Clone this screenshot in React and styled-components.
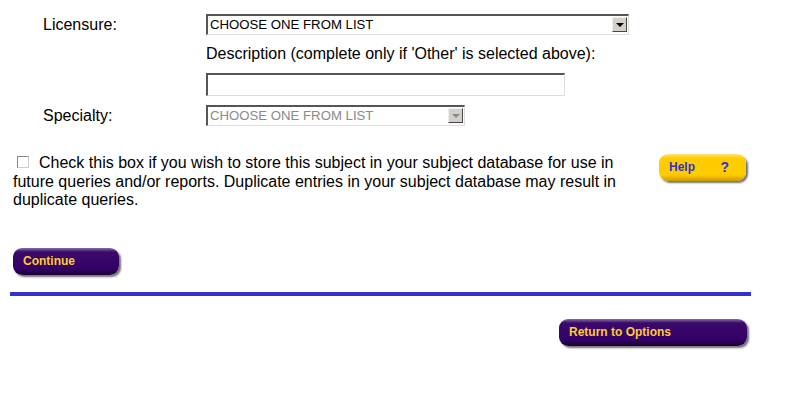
import styled, { createGlobalStyle } from "styled-components";

const GlobalStyle = createGlobalStyle`
  body {
    margin: 0;
    background: #fff;
    font-family: "Liberation Sans", Arial, sans-serif;
    color: #000;
  }
`;

const Page = styled.div`
  width: 795px;
  height: 413px;
  padding: 14px 0 0 0;
  box-sizing: border-box;
`;

const FormGrid = styled.div`
  display: grid;
  grid-template-columns: 163px 1fr;
  padding-left: 43px;
`;

const Label = styled.div`
  font-size: 16px;
  height: 21px;
  line-height: 21px;
`;

const Cell = styled.div`
  height: ${(p) => p.$h}px;
  display: flex;
  align-items: ${(p) => p.$align || "flex-start"};
  font-size: 16px;
`;

const SelectBox = styled.div`
  width: ${(p) => p.$w}px;
  height: 21px;
  box-sizing: border-box;
  border-top: 2px solid #555;
  border-left: 2px solid #555;
  border-right: 1px solid #ddd;
  border-bottom: 1px solid #ddd;
  display: flex;
  align-items: center;
  justify-content: space-between;
  padding-left: 2px;
  padding-right: 1px;
  padding-bottom: 1px;
  font-size: 13.2px;
  color: ${(p) => (p.$disabled ? "#8a8a8a" : "#000")};
  background: #fff;
`;

const ArrowBtn = styled.div`
  width: 15px;
  height: 15px;
  box-sizing: border-box;
  background: #d4d0c8;
  border-top: 1px solid #eee;
  border-left: 1px solid #eee;
  border-right: 1px solid #444;
  border-bottom: 1px solid #444;
  display: flex;
  align-items: center;
  justify-content: center;
  &::after {
    content: "";
    border-left: 4px solid transparent;
    border-right: 4px solid transparent;
    border-top: 4px solid ${(p) => (p.$disabled ? "#888" : "#000")};
    margin-top: 1px;
  }
`;

const TextInput = styled.div`
  width: 359px;
  height: 23px;
  box-sizing: border-box;
  border-top: 2px solid #555;
  border-left: 2px solid #555;
  border-right: 1px solid #ddd;
  border-bottom: 1px solid #ddd;
  background: #fff;
`;

const StoreRow = styled.div`
  display: flex;
  justify-content: space-between;
  align-items: flex-start;
  margin-top: 28px;
  padding-left: 13px;
  padding-right: 49px;
`;

const StoreText = styled.p`
  margin: 0;
  width: 615px;
  font-size: 16px;
  line-height: 18.5px;
`;

const CheckBox = styled.span`
  display: inline-block;
  width: 10px;
  height: 10px;
  border-top: 1px solid #888;
  border-left: 1px solid #888;
  border-right: 1px solid #ccc;
  border-bottom: 1px solid #ccc;
  margin: 0 10px 0 4px;
  vertical-align: 0px;
`;

const PillButton = styled.div`
  width: ${(p) => p.$w}px;
  height: 27px;
  box-sizing: border-box;
  border-radius: 9px;
  background: ${(p) =>
    p.$variant === "help"
      ? "linear-gradient(#ffe680 0px, #ffcc00 4px, #ffcc00 21px, #c89a00 27px)"
      : "linear-gradient(#8a6aa8 0px, #3a0a6a 4px, #330066 21px, #1a0033 27px)"};
  box-shadow: 2px 2px 2px rgba(0, 0, 0, 0.55);
  color: ${(p) => (p.$variant === "help" ? "#3333cc" : "#ffcc33")};
  font-weight: bold;
  font-size: 12px;
  display: flex;
  align-items: center;
  justify-content: space-between;
  padding: 1px 17px 2px 10px;
`;

const QMark = styled.span`
  font-size: 14px;
  font-weight: bold;
`;

const ContinueWrap = styled.div`
  padding-left: 13px;
  margin-top: 38px;
`;

const Rule = styled.div`
  margin: 17px 0 0 10px;
  width: 741px;
  height: 4px;
  background: #3333cc;
`;

const ReturnRow = styled.div`
  display: flex;
  justify-content: flex-end;
  padding-right: 48px;
  margin-top: 23px;
`;

export default function App() {
  return (
    <Page>
      <GlobalStyle />
      <FormGrid>
        <Label>Licensure:</Label>
        <Cell $h={21}>
          <SelectBox $w={423}>
            CHOOSE ONE FROM LIST
            <ArrowBtn />
          </SelectBox>
        </Cell>
        <div />
        <Cell $h={38} $align="center">
          Description (complete only if 'Other' is selected above):
        </Cell>
        <div />
        <Cell $h={32}>
          <TextInput />
        </Cell>
        <Label>Specialty:</Label>
        <Cell $h={21}>
          <SelectBox $w={259} $disabled>
            CHOOSE ONE FROM LIST
            <ArrowBtn $disabled />
          </SelectBox>
        </Cell>
      </FormGrid>

      <StoreRow>
        <StoreText>
          <CheckBox />
          Check this box if you wish to store this subject in your subject
          database for use in future queries and/or reports. Duplicate entries
          in your subject database may result in duplicate queries.
        </StoreText>
        <PillButton $w={87} $variant="help">
          Help <QMark>?</QMark>
        </PillButton>
      </StoreRow>

      <ContinueWrap>
        <PillButton $w={106}>Continue</PillButton>
      </ContinueWrap>

      <Rule />

      <ReturnRow>
        <PillButton $w={188}>Return to Options</PillButton>
      </ReturnRow>
    </Page>
  );
}
